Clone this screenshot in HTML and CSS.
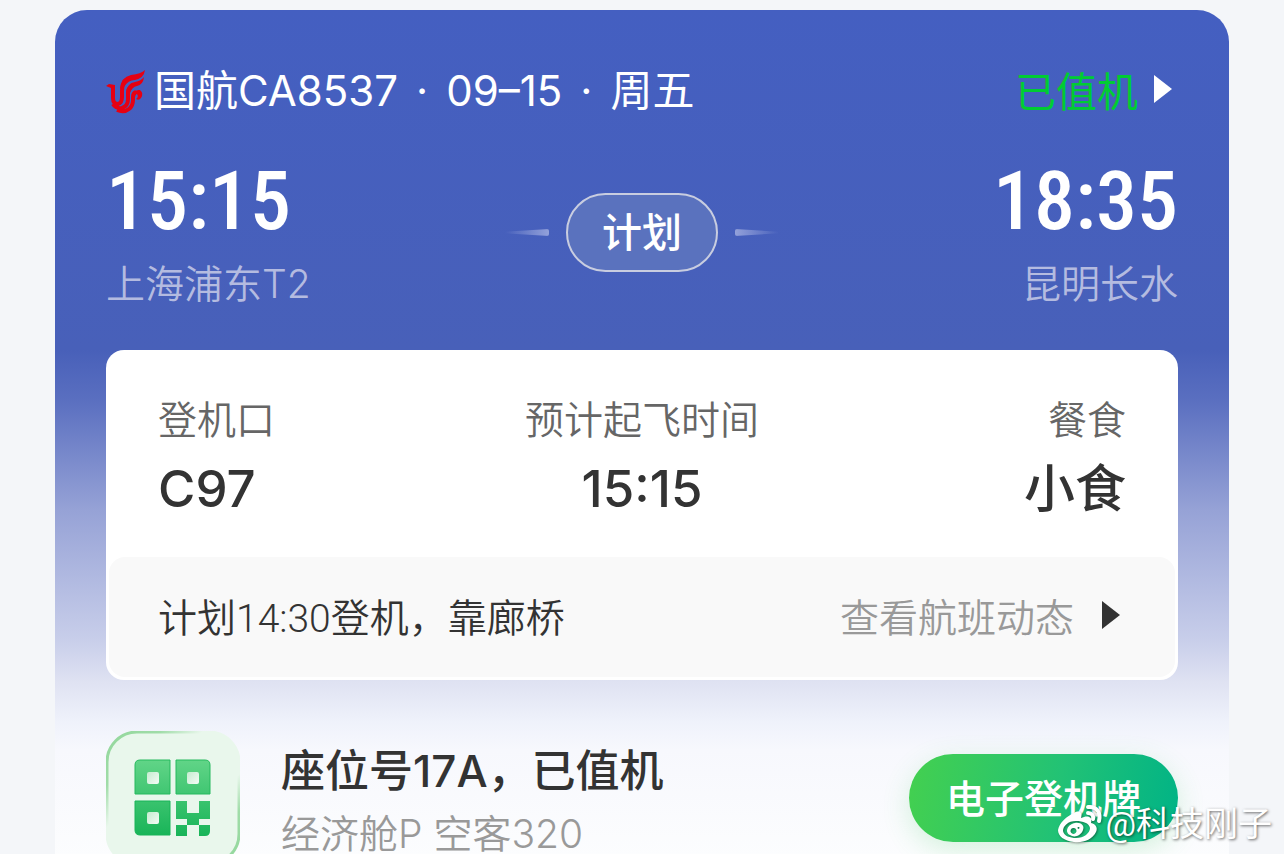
FILE: index.html
```html
<!DOCTYPE html>
<html lang="zh-CN">
<head>
    <meta charset="UTF-8">
    <meta name="viewport" content="width=device-width, initial-scale=1.0">
    <title>国航CA8537</title>
    <link rel="stylesheet" href="styles.css">
</head>
<body>
    <main class="ticket">
        <header class="ticket-header">
            <svg class="airline-logo" viewBox="0 0 44 50" aria-hidden="true">
                <path class="strand" d="M9 21 V32 Q9 38 14 38 Q18 37 18 31 V25 Q18 18 22 14"/>
                <path class="strand" d="M9 38 Q12 43 18 42 Q24 40 24 33 V27 Q24 22 28 20"/>
                <path class="strand" d="M13 44 Q20 47 25 43 Q29 40 29 34 V31 Q29 27 32 26"/>
                <path d="M2 20 L5 18 L11 19 L11 23 L7 22 Z"/>
                <path d="M16 23 Q17 11 27 9 Q37 8 41 4 Q40 12 31 14 Q24 14 20 21 Z"/>
                <path d="M22 27 Q23 17 31 16 Q37 15 40 11 Q39 19 33 20 Q28 21 26 27 Z"/>
                <path d="M28 30 Q30 23 36 24 Q40 27 37 32 Q35 35 32 33 Q35 31 33 28 Q31 28 31 32 Z"/>
            </svg>
            <h1 class="flight">
                <span>国航CA8537</span>
                <span>·</span>
                <span>09–15</span>
                <span>·</span>
                <span>周五</span>
            </h1>
            <a class="checkin" href="#">已值机
                <svg class="arrow" viewBox="0 0 18 28" aria-hidden="true"><path d="M0 0 L18 14 L0 28 Z"/></svg>
            </a>
        </header>

        <section class="route">
            <div class="stop">
                <div class="time">15:15</div>
                <div class="place">上海浦东T2</div>
            </div>
            <div class="status">
                <span class="dash dash-left"></span>
                <span class="pill">计划</span>
                <span class="dash dash-right"></span>
            </div>
            <div class="stop stop-end">
                <div class="time">18:35</div>
                <div class="place">昆明长水</div>
            </div>
        </section>

        <section class="card">
            <dl class="info">
                <div class="info-item">
                    <dt>登机口</dt>
                    <dd>C97</dd>
                </div>
                <div class="info-item">
                    <dt>预计起飞时间</dt>
                    <dd>15:15</dd>
                </div>
                <div class="info-item">
                    <dt>餐食</dt>
                    <dd>小食</dd>
                </div>
            </dl>
            <div class="notice">
                <span>计划14:30登机，靠廊桥</span>
                <a class="more" href="#">查看航班动态
                    <svg class="arrow" viewBox="0 0 18 28" aria-hidden="true"><path d="M0 0 L18 14 L0 28 Z"/></svg>
                </a>
            </div>
        </section>

        <section class="seat">
            <svg class="qr" viewBox="0 0 134 134" aria-hidden="true">
                <defs>
                    <linearGradient id="qr-fill" gradientUnits="userSpaceOnUse" x1="0" y1="28" x2="0" y2="105">
                        <stop offset="0" stop-color="#62d588"/>
                        <stop offset="1" stop-color="#18b458"/>
                    </linearGradient>
                    <linearGradient id="qr-edge" x1="0" y1="0" x2="1" y2="1">
                        <stop offset="0" stop-color="#92d79b"/>
                        <stop offset="0.2" stop-color="#a0dca8"/>
                        <stop offset="0.36" stop-color="#e9f7ec"/>
                        <stop offset="0.66" stop-color="#e9f7ec"/>
                        <stop offset="0.8" stop-color="#a0dca8"/>
                        <stop offset="1" stop-color="#92d79b"/>
                    </linearGradient>
                    <linearGradient id="qr-dot" x1="0" y1="0" x2="1" y2="1">
                        <stop offset="0" stop-color="#c5ebd0"/>
                        <stop offset="1" stop-color="#f4fcf6"/>
                    </linearGradient>
                </defs>
                <rect x="1" y="1" width="132" height="132" rx="30" fill="#e9f7ec" stroke="url(#qr-edge)" stroke-width="3"/>
                <g fill="url(#qr-fill)">
                    <path d="M34 29 H64 V63 H29 V34 Q29 29 34 29 Z" stroke="#27b95e"/>
                    <path d="M70 29 H99 Q104 29 104 34 V63 H70 Z" stroke="#27b95e"/>
                    <path d="M29 70 H64 V104 H34 Q29 104 29 99 Z" stroke="#18b458"/>
                    <path d="M70 70 H81 V82 H93 V70 H104 V88 H93 V94 H81 V88 H70 Z"/>
                    <path d="M70 94 H81 V105 H70 Z M93 94 H104 V100 Q104 105 99 105 H93 Z"/>
                </g>
                <g fill="url(#qr-dot)">
                    <rect x="41" y="41" width="12" height="12" rx="2"/>
                    <rect x="81" y="41" width="12" height="12" rx="2"/>
                    <rect x="41" y="81" width="12" height="12" rx="2"/>
                </g>
            </svg>
            <div class="seat-text">
                <h2>座位号17A，已值机</h2>
                <p>经济舱P 空客320</p>
            </div>
            <button class="boarding" type="button">电子登机牌</button>
        </section>
    </main>

    <div class="watermark">
        <svg class="weibo" viewBox="0 0 46 40" aria-hidden="true">
            <path fill-rule="evenodd" d="M17 9 C22 6 26 8 24 14 C30 11 36 12 34 19 C39 20 41 24 39 28 C35 36 26 39 17 38 C7 37 1 32 1 26 C2 19 10 12 17 9 Z M19 17 C11 17 6 22 6 27 C7 32 13 34 19 34 C27 34 33 29 33 24 C32 19 26 17 19 17 Z"/>
            <path fill-rule="evenodd" d="M18 19 C24 18 28 22 26 26 C24 32 17 34 13 31 C7 28 11 20 18 19 Z M16 24 a3 3 0 1 0 1 0 Z M21 23 a1 1 0 1 0 1 0 Z"/>
            <path class="wave" d="M31 3 C40 2 44 9 42 17 M31 9 C35 9 37 12 36 15"/>
        </svg>
        <span>@科技刚子</span>
    </div>
</body>
</html>
```

FILE: styles.css
```css
* {
    box-sizing: border-box;
}
body {
    margin: 0;
    height: 100vh;
    overflow: hidden;
    padding: 10px 55px 0;
    background-color: #f4f6f9;
    color: #333;
    font-family: Inter, "Noto Sans CJK SC", sans-serif;
    font-size: 39px;
}
h1, h2, p, dl, dd {
    margin: 0;
    font-weight: 400;
}
a {
    color: inherit;
    text-decoration: none;
}
.ticket {
    padding: 51px 51px 40px;
    border-radius: 32px 32px 0 0;
    background: linear-gradient(#445fc1 0, #4860b9 340px, #5a6fc0 390px, #96a2d6 500px, #c8ceea 630px, #dfe2f2 672px, #eff2fb 712px, #f7f8fd 740px, #fcfdfe 850px);
}
.ticket-header {
    display: flex;
    align-items: center;
    height: 60px;
    color: #fff;
    font-size: 41px;
}
.airline-logo {
    width: 44px;
    height: 50px;
    margin-right: 6px;
    margin-left: -2px;
    fill: #e60012;
}
.airline-logo .strand {
    fill: none;
    stroke: #e60012;
    stroke-width: 4;
}
.flight {
    display: flex;
    align-items: baseline;
    gap: 18px;
    font-size: 42px;
    line-height: 60px;
}
.checkin, .more {
    display: flex;
    align-items: center;
    margin-left: auto;
}
.checkin {
    gap: 16px;
    padding: 0 6px 4px 0;
    color: #00cc33;
}
.arrow {
    width: 18px;
    height: 28px;
    fill: #fff;
}
.route {
    display: grid;
    grid-template-columns: 1fr auto 1fr;
    align-items: center;
    margin: 42px 0;
    color: #fff;
}
.stop-end {
    text-align: right;
}
.time {
    font-family: "Roboto Condensed", Roboto, sans-serif;
    font-size: 82px;
    font-weight: 500;
    line-height: 76px;
}
.place {
    margin-top: 21px;
    color: #b4bbe0;
    font-weight: 350;
    line-height: 48px;
}
.status {
    display: flex;
    align-items: center;
    gap: 17px;
    margin-bottom: 6px;
}
.pill {
    padding: 0 34px;
    border: 2px solid #c8cde0;
    border-radius: 40px;
    background-color: #5a72be;
    font-size: 40px;
    font-weight: 500;
    line-height: 75px;
}
.dash {
    width: 44px;
    height: 7px;
    border-radius: 2px;
}
.dash-left {
    background: linear-gradient(to left, #93a1da, transparent);
    clip-path: polygon(0 40%, 100% 0, 100% 100%, 0 60%);
}
.dash-right {
    background: linear-gradient(to right, #93a1da, transparent);
    clip-path: polygon(100% 40%, 0 0, 0 100%, 100% 60%);
}
.card {
    padding: 3px;
    border-radius: 18px;
    background-color: #fff;
}
.info {
    display: grid;
    grid-template-columns: 1fr auto 1fr;
    padding: 41px 49px 34px;
}
.info-item {
    text-align: center;
}
.info-item:first-child {
    text-align: left;
}
.info-item:last-child {
    text-align: right;
}
.info dt {
    color: #666;
    font-weight: 350;
    line-height: 52px;
}
.info dd {
    margin-top: 9px;
    font-size: 51px;
    font-weight: 500;
    line-height: 68px;
}
.notice {
    display: flex;
    align-items: center;
    height: 120px;
    padding: 0 49px 4px;
    border-radius: 16px;
    background-color: #f9f9f9;
    font-family: Roboto, "Noto Sans CJK SC", sans-serif;
    font-weight: 350;
}
.more {
    gap: 28px;
    padding-right: 6px;
    color: #999;
}
.more .arrow {
    fill: #333;
}
.seat {
    display: flex;
    align-items: center;
    margin-top: 51px;
}
.qr {
    width: 134px;
    height: 134px;
}
.seat-text {
    flex: 1;
    margin-left: 41px;
    padding-top: 4px;
}
.seat h2 {
    font-size: 44px;
    font-weight: 500;
    line-height: 60px;
}
.seat p {
    margin-top: 8px;
    color: #999;
    font-weight: 350;
    line-height: 50px;
}
.boarding {
    height: 88px;
    padding: 0 37px 5px;
    border: 0;
    border-radius: 44px;
    background: linear-gradient(100deg, #44d04f, #22c275 55%, #00b386);
    box-shadow: 0 8px 28px rgba(60, 200, 90, 0.2);
    color: #fff;
    font-family: inherit;
    font-size: 39px;
    font-weight: 500;
}
.watermark {
    position: absolute;
    right: 12px;
    bottom: 5px;
    display: flex;
    align-items: center;
    gap: 2px;
    color: #fff;
    font-family: Roboto, "Noto Sans CJK SC", sans-serif;
    font-size: 34px;
    line-height: 50px;
    text-shadow: 1px 1px 3px rgba(0, 0, 0, 0.6);
}
.weibo {
    width: 46px;
    height: 40px;
    fill: #fff;
    filter: drop-shadow(1px 1px 1px rgba(0, 0, 0, 0.4));
}
.weibo .wave {
    fill: none;
    stroke: #fff;
    stroke-width: 4;
    stroke-linecap: round;
}
```
